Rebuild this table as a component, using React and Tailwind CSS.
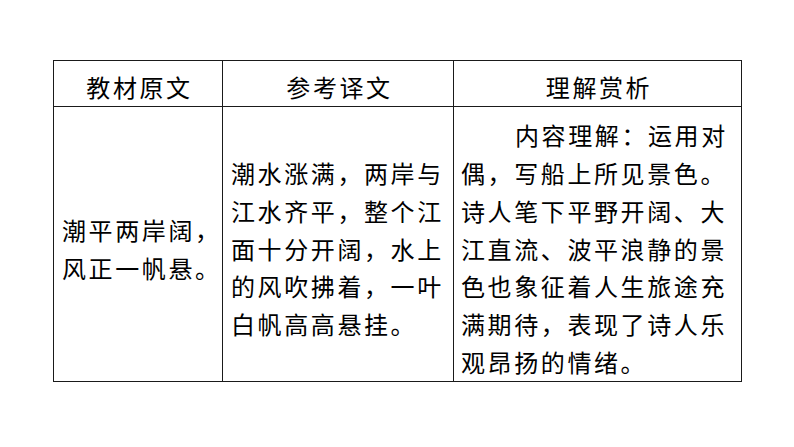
import React from "react";

const font = { fontFamily: '"Noto Sans CJK SC", "Noto Sans", sans-serif' };

function Lines({ lines, indentFirst }) {
  return (
    <div className="flex flex-col">
      {lines.map((l, i) => (
        <div
          key={i}
          className={
            "whitespace-nowrap leading-[37.8px] " +
            (indentFirst && i === 0 ? "pl-[54px]" : "")
          }
        >
          {l}
        </div>
      ))}
    </div>
  );
}

export default function App() {
  return (
    <div
      className="w-[794px] h-[447px] bg-white text-black overflow-hidden pt-[60px] pl-[53px]"
      style={font}
    >
      <div className="w-[689px] border border-[#1a1a1a] text-[24px] tracking-[2.6px]">
        <div className="flex h-[46px] border-b border-[#1a1a1a]">
          <div className="w-[169px] border-r border-[#1a1a1a] flex items-center justify-center pt-[7px] pl-[3px]">
            教材原文
          </div>
          <div className="w-[231px] border-r border-[#1a1a1a] flex items-center justify-center pt-[7px] pl-[3px]">
            参考译文
          </div>
          <div className="flex-1 flex items-center justify-center pt-[7px] pl-[3px]">
            理解赏析
          </div>
        </div>
        <div className="flex h-[274px]">
          <div className="w-[169px] border-r border-[#1a1a1a] flex items-center pt-[9px] pl-[8px]">
            <Lines lines={["潮平两岸阔，", "风正一帆悬。"]} />
          </div>
          <div className="w-[231px] border-r border-[#1a1a1a] flex items-center pt-[9px] pl-[8px]">
            <Lines
              lines={[
                "潮水涨满，两岸与",
                "江水齐平，整个江",
                "面十分开阔，水上",
                "的风吹拂着，一叶",
                "白帆高高悬挂。",
              ]}
            />
          </div>
          <div className="flex-1 flex items-center pt-[9px] pl-[7px]">
            <Lines
              indentFirst
              lines={[
                "内容理解：运用对",
                "偶，写船上所见景色。",
                "诗人笔下平野开阔、大",
                "江直流、波平浪静的景",
                "色也象征着人生旅途充",
                "满期待，表现了诗人乐",
                "观昂扬的情绪。",
              ]}
            />
          </div>
        </div>
      </div>
    </div>
  );
}
